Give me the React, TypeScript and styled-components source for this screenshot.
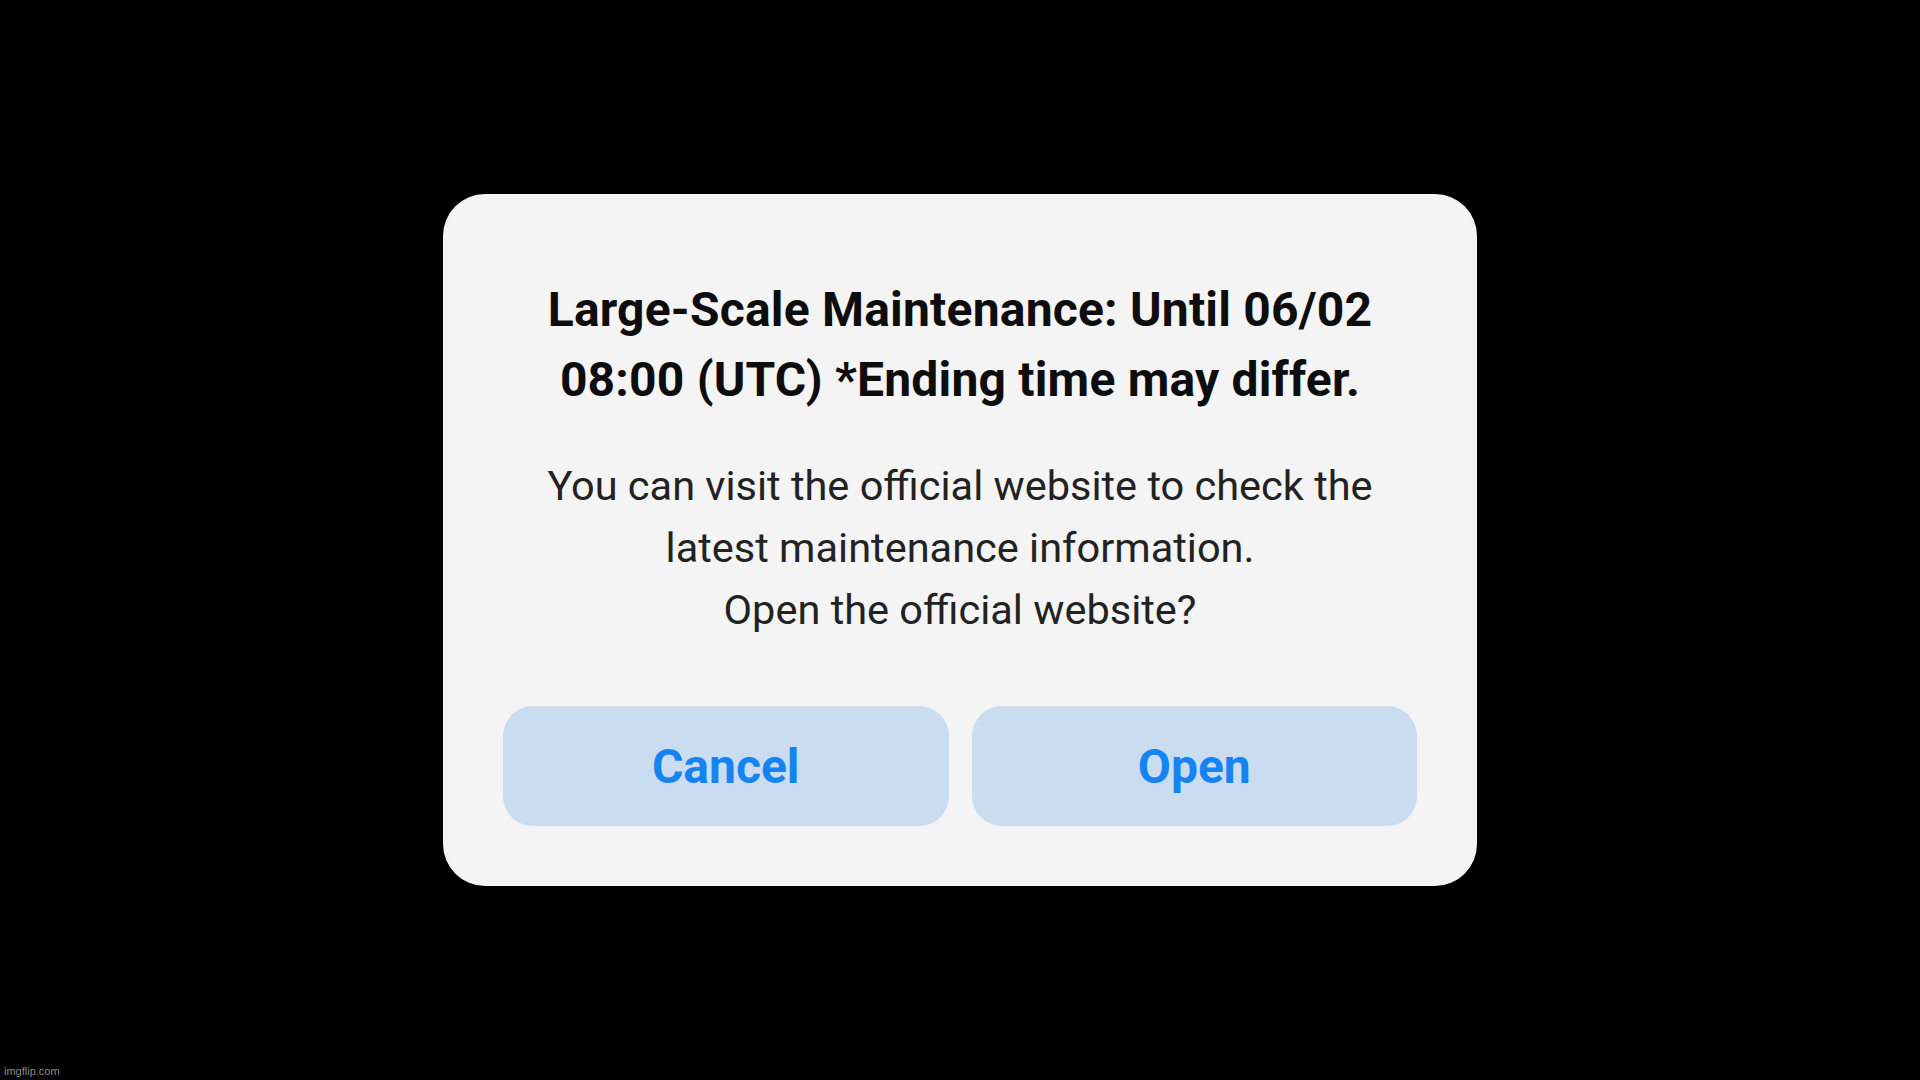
import React from 'react';
import styled, { createGlobalStyle } from 'styled-components';

const GlobalStyle = createGlobalStyle`
  html, body {
    margin: 0;
    padding: 0;
    background: #000;
  }
  body {
    font-family: Roboto, "Liberation Sans", sans-serif;
  }
`;

const Screen = styled.div`
  position: relative;
  width: 100vw;
  height: 100vh;
  display: flex;
  align-items: center;
  justify-content: center;
  background: #000;
`;

const Dialog = styled.div`
  width: 1034px;
  box-sizing: border-box;
  padding: 81px 60px 60px;
  background: #f4f4f4;
  border-radius: 42px;
  display: flex;
  flex-direction: column;
  align-items: center;
`;

const Title = styled.h1`
  margin: 0;
  font-size: 48px;
  line-height: 70px;
  font-weight: 700;
  color: #0d0d0d;
  text-align: center;
  letter-spacing: 0.2px;
`;

const Message = styled.p`
  margin: 40px 0 0;
  font-size: 41.5px;
  line-height: 62px;
  font-weight: 400;
  color: #222;
  text-align: center;
`;

const Actions = styled.div`
  width: 100%;
  margin-top: 65px;
  display: grid;
  grid-template-columns: 1fr 1fr;
  gap: 23px;
`;

const Button = styled.button`
  height: 120px;
  border: none;
  border-radius: 30px;
  background: #cadcf0;
  color: #1583f2;
  font-family: Roboto, "Liberation Sans", sans-serif;
  font-size: 48px;
  font-weight: 700;
  cursor: pointer;
`;

const Watermark = styled.span`
  position: absolute;
  left: 4px;
  bottom: 3px;
  font-family: "Liberation Sans", Arial, sans-serif;
  font-size: 11px;
  color: #8a8a8a;
`;

export default function App() {
  return (
    <Screen>
      <GlobalStyle />
      <Dialog>
        <Title>
          Large-Scale Maintenance: Until 06/02
          <br />
          08:00 (UTC) *Ending time may differ.
        </Title>
        <Message>
          You can visit the official website to check the
          <br />
          latest maintenance information.
          <br />
          Open the official website?
        </Message>
        <Actions>
          <Button type="button">Cancel</Button>
          <Button type="button">Open</Button>
        </Actions>
      </Dialog>
      <Watermark>imgflip.com</Watermark>
    </Screen>
  );
}
